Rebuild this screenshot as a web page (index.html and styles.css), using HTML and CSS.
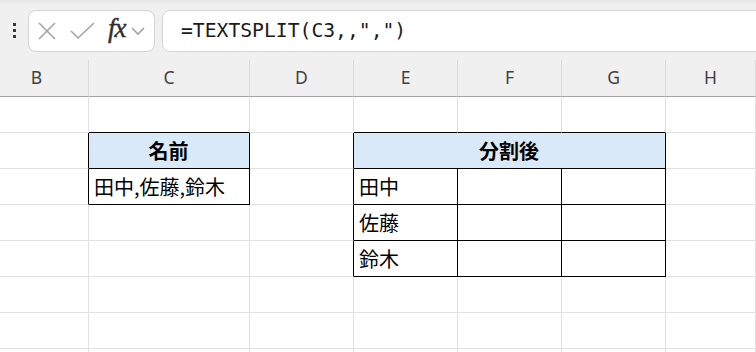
FILE: index.html
```html
<!DOCTYPE html>
<html lang="ja">
  <head>
    <meta charset="UTF-8" />
    <title>TEXTSPLIT</title>
    <meta name="viewport" content="width=device-width, initial-scale=1.0" />
    <link rel="stylesheet" href="styles.css">
  </head>
  <body>
    <div class="toolbar">
      <div class="grip"><span></span><span></span><span></span></div>
      <div class="namebox">
        <svg class="icon" width="20" height="20" viewBox="0 0 20 20">
          <path d="M2 2 L18 18 M18 2 L2 18" />
        </svg>
        <svg class="icon check" width="26" height="20" viewBox="0 0 26 20">
          <path d="M1 10 L8 17 L24 2" />
        </svg>
        <span class="fx">fx</span>
        <svg class="icon chev" width="14" height="10" viewBox="0 0 14 10">
          <path d="M1 2 L7 8 L13 2" />
        </svg>
      </div>
      <div class="formula">=TEXTSPLIT(C3,,",")</div>
    </div>

    <div class="sheet">
      <div class="col">B</div>
      <div class="col">C</div>
      <div class="col">D</div>
      <div class="col">E</div>
      <div class="col">F</div>
      <div class="col">G</div>
      <div class="col">H</div>

      <!-- row 1 -->
      <div class="cell"></div>
      <div class="cell bb"></div>
      <div class="cell"></div>
      <div class="cell bb"></div>
      <div class="cell bb"></div>
      <div class="cell bb"></div>
      <div class="cell"></div>

      <!-- row 2 -->
      <div class="cell br"></div>
      <div class="cell hd br bb">名前</div>
      <div class="cell br"></div>
      <div class="cell hd br bb span3">分割後</div>
      <div class="cell"></div>

      <!-- row 3 -->
      <div class="cell br"></div>
      <div class="cell br bb">田中,佐藤,鈴木</div>
      <div class="cell br"></div>
      <div class="cell br bb">田中</div>
      <div class="cell br bb"></div>
      <div class="cell br bb"></div>
      <div class="cell"></div>

      <!-- row 4 -->
      <div class="cell"></div>
      <div class="cell"></div>
      <div class="cell br"></div>
      <div class="cell br bb">佐藤</div>
      <div class="cell br bb"></div>
      <div class="cell br bb"></div>
      <div class="cell"></div>

      <!-- row 5 -->
      <div class="cell"></div>
      <div class="cell"></div>
      <div class="cell br"></div>
      <div class="cell br bb">鈴木</div>
      <div class="cell br bb"></div>
      <div class="cell br bb"></div>
      <div class="cell"></div>

      <!-- row 6 -->
      <div class="cell"></div>
      <div class="cell"></div>
      <div class="cell"></div>
      <div class="cell"></div>
      <div class="cell"></div>
      <div class="cell"></div>
      <div class="cell"></div>

      <!-- row 7 -->
      <div class="cell"></div>
      <div class="cell"></div>
      <div class="cell"></div>
      <div class="cell"></div>
      <div class="cell"></div>
      <div class="cell"></div>
      <div class="cell"></div>

      <!-- row 8 -->
      <div class="cell"></div>
      <div class="cell"></div>
      <div class="cell"></div>
      <div class="cell"></div>
      <div class="cell"></div>
      <div class="cell"></div>
      <div class="cell"></div>
    </div>
  </body>
</html>
```

FILE: styles.css
```css
:root {
  --bar-bg: #f0f0f0;
  --grid: #e1e1e1;
  --box-border: #d4d4d4;
  --fill: #dae9f8;
}

* {
  box-sizing: border-box;
}

body {
  margin: 0;
  width: 756px;
  height: 352px;
  overflow: hidden;
  background: #ffffff;
  font-family: "Noto Sans", sans-serif;
}

/* formula bar */
.toolbar {
  height: 60px;
  background: linear-gradient(#e4e4e4 0, var(--bar-bg) 4px);
  display: flex;
  align-items: center;
  padding-top: 1px;
}

.grip {
  width: 28px;
  display: flex;
  flex-direction: column;
  align-items: center;
  gap: 3px;
  padding-left: 1px;
}

.grip span {
  width: 3px;
  height: 3px;
  background: #3a3a3a;
}

.namebox {
  width: 127px;
  height: 42px;
  background: #ffffff;
  border: 1px solid var(--box-border);
  border-radius: 8px;
  display: flex;
  align-items: center;
  padding-left: 8px;
}

.icon path {
  fill: none;
  stroke: #a3a3a3;
  stroke-width: 1.6;
}

.check {
  margin-left: 13px;
}

.fx {
  margin-left: 12px;
  font-family: "Liberation Serif", serif;
  font-style: italic;
  font-size: 27px;
  color: #2e2e2e;
  letter-spacing: -1px;
  line-height: 1;
  margin-top: -4px;
  -webkit-text-stroke: 0.4px #2e2e2e;
}

.chev {
  margin-left: 5px;
}

.formula {
  flex: 1;
  margin-left: 7px;
  margin-right: -12px;
  height: 42px;
  background: #ffffff;
  border: 1px solid var(--box-border);
  border-radius: 8px;
  display: flex;
  align-items: center;
  padding-left: 18px;
  font-family: "DejaVu Sans Mono", monospace;
  font-size: 19.7px;
  color: #1a1a1a;
}

/* worksheet */
.sheet {
  display: grid;
  grid-template-columns: 104px 161px 104px 104px 104px 104px 1fr;
  grid-template-rows: 37px repeat(8, 36px);
  margin-left: -15px;
  height: 292px;
  overflow: hidden;
}

.col {
  background: var(--bar-bg);
  border-right: 1px solid #dadada;
  border-bottom: 1px solid #a3a3a3;
  display: flex;
  align-items: center;
  justify-content: center;
  font-size: 17.5px;
  color: #404040;
  padding-bottom: 2px;
}

.cell {
  border-right: 1px solid var(--grid);
  border-bottom: 1px solid var(--grid);
  display: flex;
  align-items: center;
  padding: 0 6px 0 5px;
  font-family: "Noto Sans CJK JP", sans-serif;
  font-size: 20px;
  color: #000000;
  white-space: nowrap;
}

.br {
  border-right-color: #000000;
}

.bb {
  border-bottom-color: #000000;
}

.hd {
  background: var(--fill);
  justify-content: center;
  font-weight: 700;
}

.span3 {
  grid-column: span 3;
}
```
